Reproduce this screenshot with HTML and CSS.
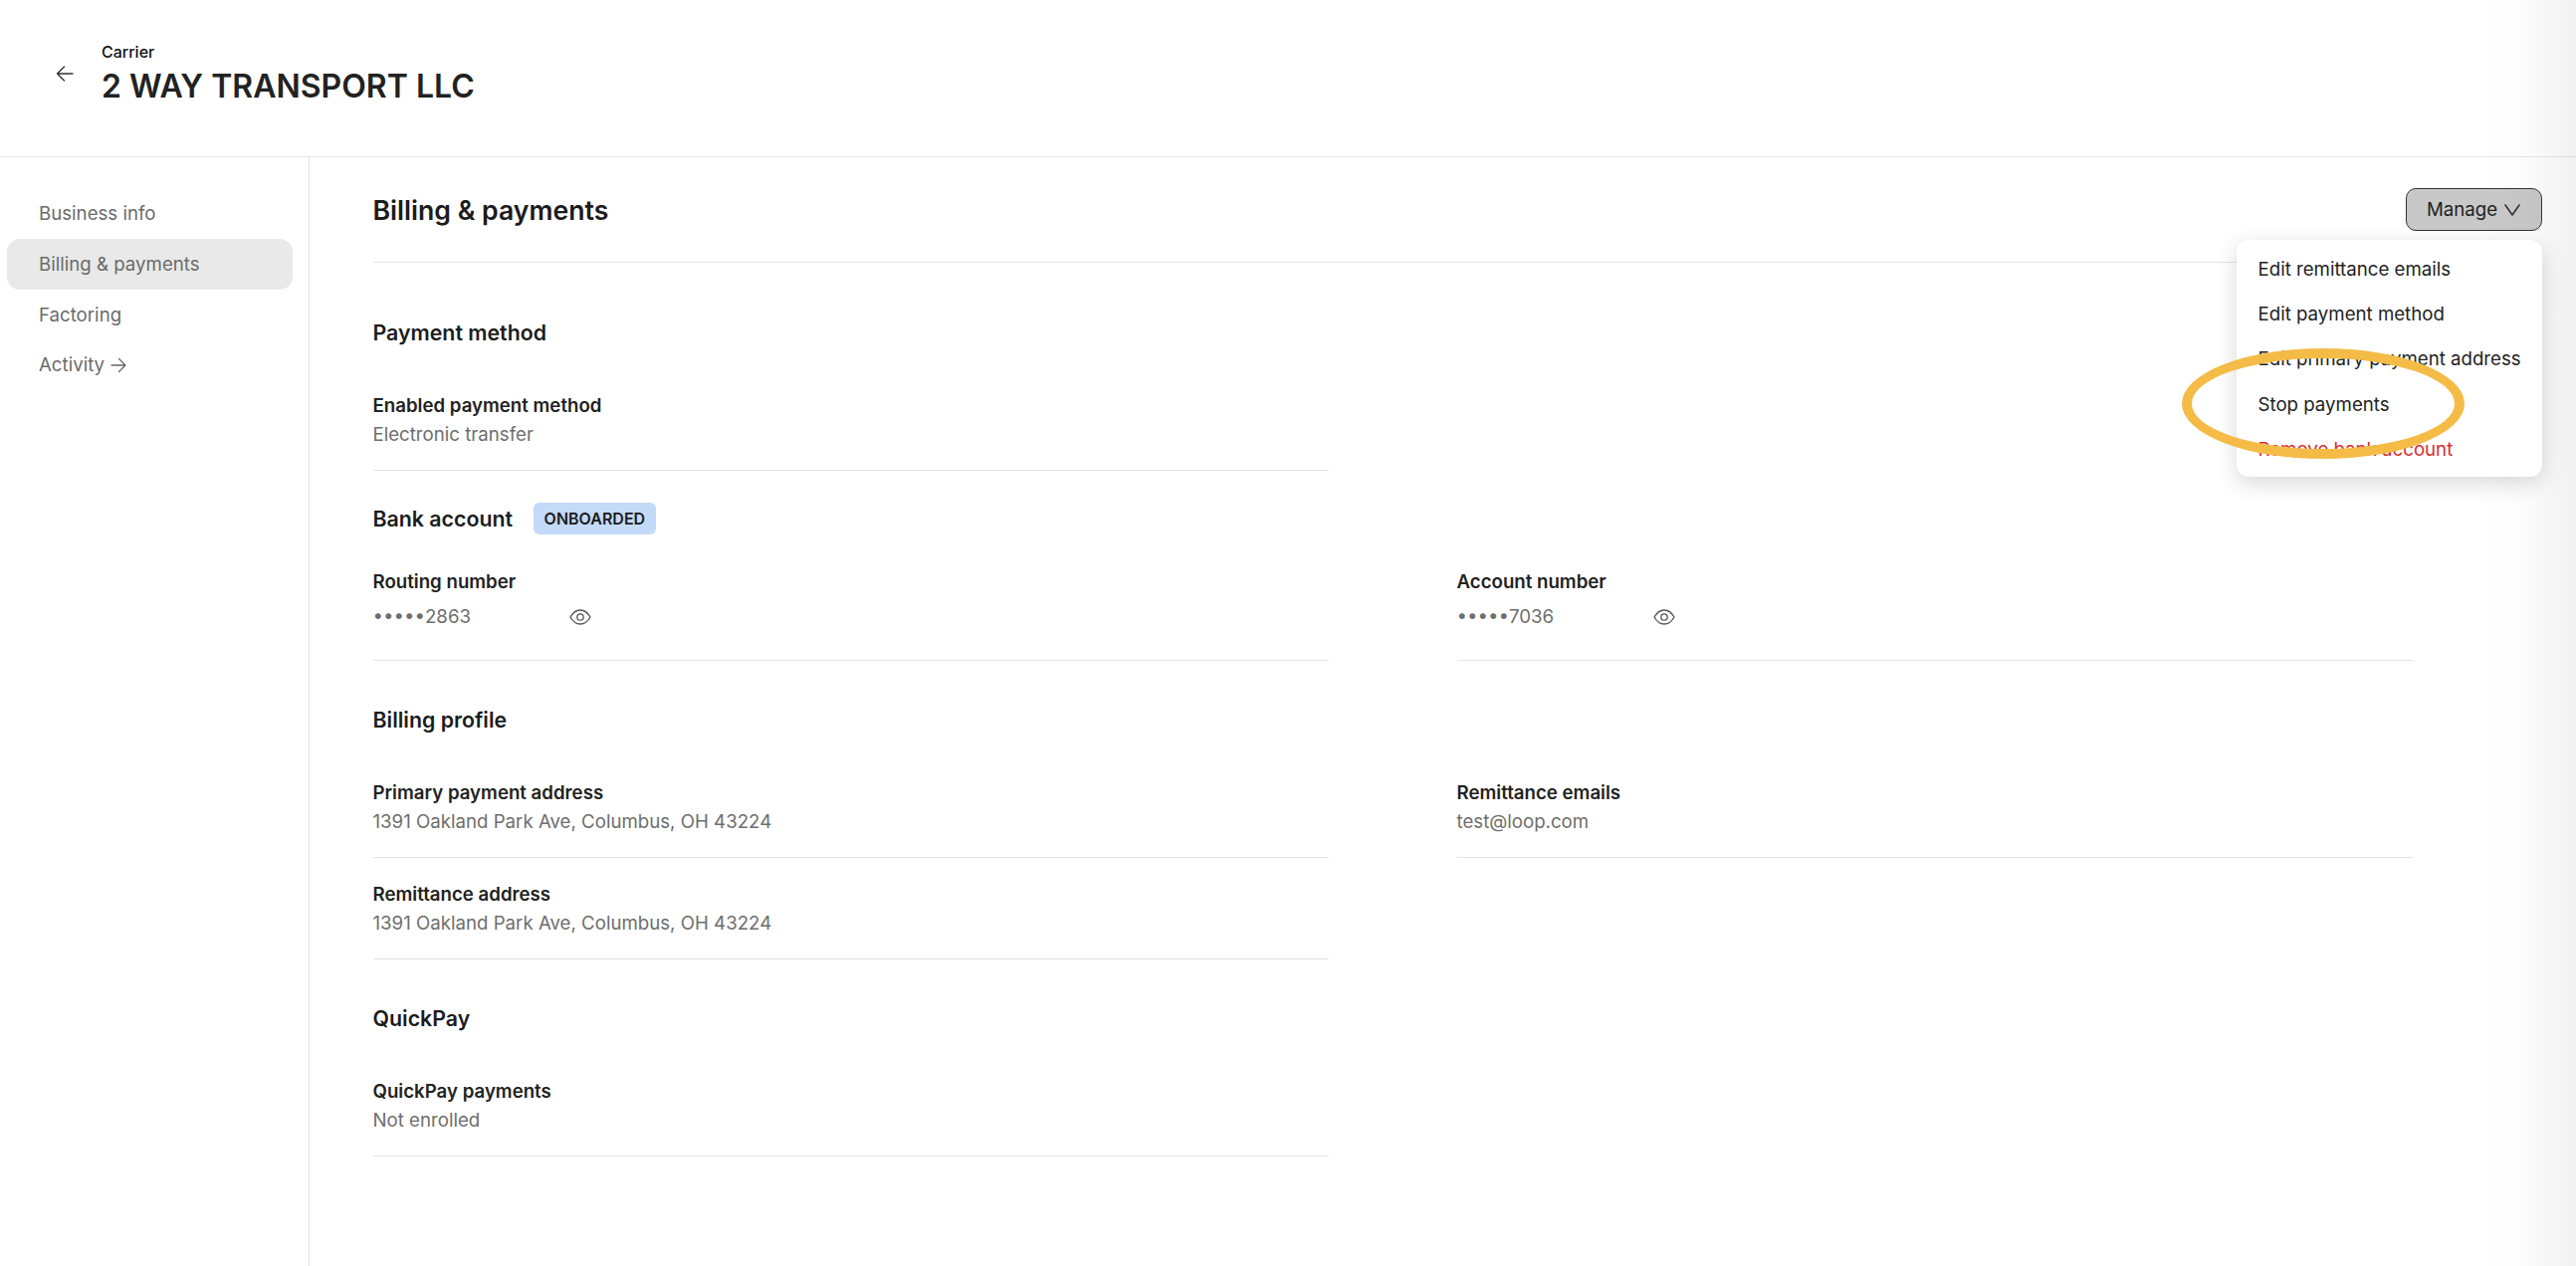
FILE: index.html
```html
<!DOCTYPE html>
<html lang="en">
<head>
<meta charset="utf-8">
<title>2 WAY TRANSPORT LLC</title>
<link rel="stylesheet" href="styles.css">
</head>
<body>
<header class="top">
  <svg class="back" viewBox="0 0 18 18" width="18" height="18" fill="none" stroke="#333" stroke-width="1.4" stroke-linecap="round" stroke-linejoin="round"><path d="M17 9H1.500M8.500 2 1.500 9l7 7"/></svg>
  <div class="top-text">
    <div class="kicker">Carrier</div>
    <h1 class="name">2 WAY TRANSPORT LLC</h1>
  </div>
</header>
<div class="body">
  <nav class="side">
    <a class="nav">Business info</a>
    <a class="nav active">Billing &amp; payments</a>
    <a class="nav">Factoring</a>
    <a class="nav last">Activity
      <svg class="nav-arrow" viewBox="0 0 16 16" width="16" height="16" fill="none" stroke="#666" stroke-width="1.3" stroke-linecap="round" stroke-linejoin="round"><path d="M1 8h14M8.500 1.500 15 8l-6.500 6.500"/></svg>
    </a>
  </nav>
  <main class="main">
    <div class="page-head">
      <h2 class="page-title">Billing &amp; payments</h2>
      <div class="manage-wrap">
        <button class="manage">Manage
          <svg viewBox="0 0 16 12" width="16" height="12" fill="none" stroke="#333" stroke-width="1.600" stroke-linecap="round" stroke-linejoin="round"><path d="M1 1l7 10 7-10"/></svg>
        </button>
        <div class="menu">
          <div class="item">Edit remittance emails</div>
          <div class="item">Edit payment method</div>
          <div class="item">Edit primary payment address</div>
          <div class="item">Stop payments</div>
          <div class="item danger">Remove bank account</div>
        </div>
        <div class="ring"></div>
      </div>
    </div>

    <h3 class="section first">Payment method</h3>
    <div class="grid">
      <div class="field">
        <div class="label">Enabled payment method</div>
        <div class="value">Electronic transfer</div>
      </div>
    </div>

    <div class="section-row">
      <h3 class="section inline">Bank account</h3>
      <span class="badge">ONBOARDED</span>
    </div>
    <div class="grid bank">
      <div class="field">
        <div class="label">Routing number</div>
        <div class="value secret"><span class="mask">•••••2863</span>
          <svg viewBox="0 0 22 16" width="22" height="16" fill="none" stroke="#555" stroke-width="1.3"><path d="M1 8c2.500-4.500 6-7 10-7s7.500 2.500 10 7c-2.500 4.500-6 7-10 7s-7.500-2.500-10-7z"/><circle cx="11" cy="8" r="3.200"/></svg>
        </div>
      </div>
      <div class="field">
        <div class="label">Account number</div>
        <div class="value secret"><span class="mask">•••••7036</span>
          <svg viewBox="0 0 22 16" width="22" height="16" fill="none" stroke="#555" stroke-width="1.3"><path d="M1 8c2.500-4.500 6-7 10-7s7.500 2.500 10 7c-2.500 4.500-6 7-10 7s-7.500-2.500-10-7z"/><circle cx="11" cy="8" r="3.200"/></svg>
        </div>
      </div>
    </div>

    <h3 class="section spaced">Billing profile</h3>
    <div class="grid">
      <div class="field">
        <div class="label">Primary payment address</div>
        <div class="value">1391 Oakland Park Ave, Columbus, OH 43224</div>
      </div>
      <div class="field">
        <div class="label">Remittance emails</div>
        <div class="value">test@loop.com</div>
      </div>
      <div class="field">
        <div class="label">Remittance address</div>
        <div class="value">1391 Oakland Park Ave, Columbus, OH 43224</div>
      </div>
    </div>

    <h3 class="section spaced">QuickPay</h3>
    <div class="grid">
      <div class="field">
        <div class="label">QuickPay payments</div>
        <div class="value">Not enrolled</div>
      </div>
    </div>
  </main>
</div>
<div class="edge"></div>
</body>
</html>
```

FILE: styles.css
```css
* { box-sizing: border-box; }
html, body { margin: 0; height: 100%; }
body {
  font-family: Inter, "Liberation Sans", sans-serif;
  color: #1c1c1c;
  background: #fff;
  overflow: hidden;
  height: 1272px;
  display: flex;
  flex-direction: column;
}
.edge {
  position: absolute;
  top: 0;
  right: 0;
  width: 100px;
  height: 100%;
  background: linear-gradient(to right, rgba(0,0,0,0), rgba(0,0,0,.012) 50%, rgba(0,0,0,.025) 61%, rgba(0,0,0,.055));
  pointer-events: none;
}
.top {
  height: 158px;
  flex: none;
  border-bottom: 1px solid #e4e4e4;
  display: flex;
  align-items: flex-start;
  padding: 40px 0 0 56px;
  gap: 28px;
}
.back { margin-top: 25px; }
.kicker { font-size: 16px; font-weight: 500; line-height: 24px; color: #111; }
.name { margin: 0; font-size: 32px; font-weight: 600; line-height: 46px; color: #222; }
.body { flex: 1; display: flex; min-height: 0; }
.side {
  width: 311px;
  flex: none;
  border-right: 1px solid #e4e4e4;
  padding: 31px 16px 0 7px;
}
.nav {
  height: 51px;
  display: flex;
  align-items: center;
  gap: 6px;
  padding-left: 32px;
  border-radius: 13px;
  font-size: 18.670px;
  color: #6b6b6b;
}
.nav.active { background: #e9e9e9; }
.nav.last { height: 49px; }
.main { flex: 1; padding: 0 0 0 63.500px; min-width: 0; }
.page-head {
  width: 2050px;
  height: 106px;
  border-bottom: 1px solid #e4e4e4;
  position: relative;
  display: flex;
  align-items: flex-start;
}
.page-title { margin: 34px 0 0; font-size: 26.670px; line-height: 38px; font-weight: 600; color: #1c1c1c; }
.manage-wrap { position: absolute; right: -129px; top: 31px; width: 137px; }
.manage {
  width: 137px;
  height: 43px;
  border: 1.5px solid #333;
  border-radius: 10px;
  background: #c8c8c8;
  color: #222;
  font: 400 18.670px Inter, sans-serif;
  display: flex;
  align-items: center;
  justify-content: center;
  gap: 7px;
  padding: 0;
}
.menu {
  position: absolute;
  right: 0;
  top: 52px;
  width: 307px;
  height: 238px;
  padding: 7px 0 0 22px;
  background: #fff;
  border-radius: 12px;
  box-shadow: 0 6px 22px rgba(0,0,0,.16);
  z-index: 2;
}
.item { height: 45.200px; line-height: 45px; font-size: 18.670px; white-space: nowrap; color: #222; }
.item.danger { color: #d92d2d; }
.ring {
  position: absolute;
  z-index: 3;
  left: -225px;
  top: 161px;
  width: 284px;
  height: 111px;
  border: 10px solid #f4bc47;
  border-radius: 50%;
}
.section { margin: 0; font-size: 21.330px; font-weight: 600; line-height: 30px; color: #1c1c1c; }
.section.first { margin: 55px 0 44px; }
.section.spaced { margin: 44px 0; }
.section-row { display: flex; align-items: center; gap: 21px; height: 32px; margin: 32px 0 33px; }
.grid { display: grid; grid-template-columns: 960px 960px; column-gap: 129px; row-gap: 22px; }
.field { border-bottom: 1px solid #e4e4e4; padding: 2px 0 19px; }
.label { font-size: 18.670px; font-weight: 600; line-height: 26px; color: #222; }
.value { font-size: 18.670px; line-height: 32px; color: #6e6e6e; }
.badge {
  background: #c3daf9;
  border-radius: 6px;
  height: 32px;
  line-height: 32px;
  padding: 0 10.500px;
  font-size: 16px;
  font-weight: 600;
  color: #1c1c1c;
}
.bank .field { padding-bottom: 24px; }
.bank .label { margin-bottom: 3px; }
.secret { display: flex; align-items: center; height: 38px; }
.mask { width: 197px; }
```
